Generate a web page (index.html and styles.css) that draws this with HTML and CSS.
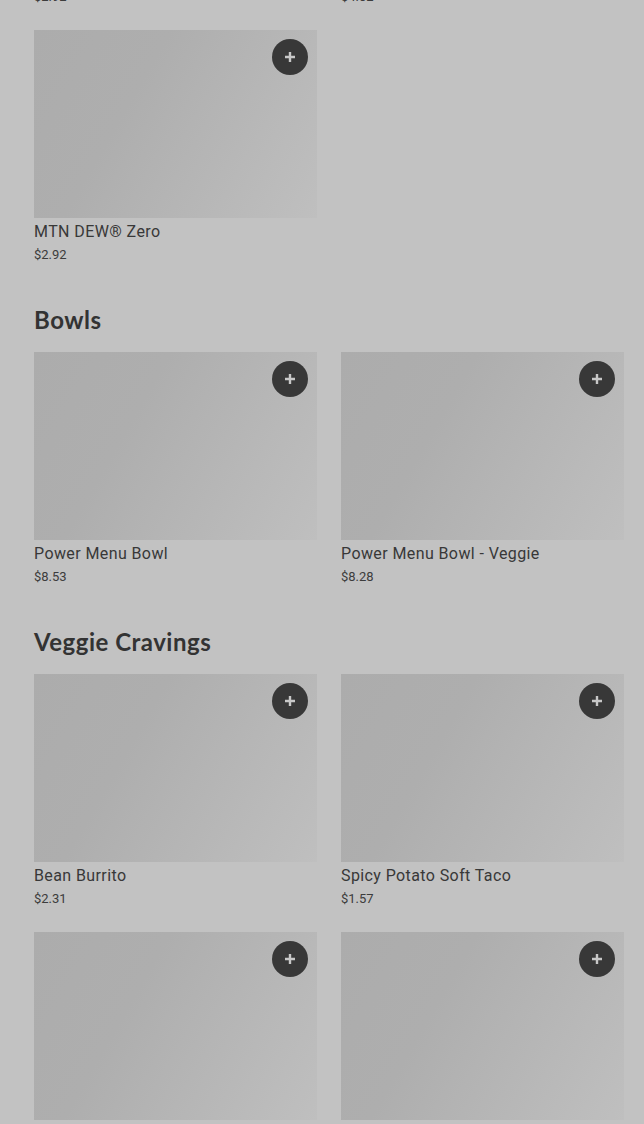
FILE: index.html
```html
<!DOCTYPE html>
<html lang="en">
  <head>
    <meta charset="UTF-8" />
    <meta name="viewport" content="width=device-width, initial-scale=1.0" />
    <title>Menu</title>
    <link rel="stylesheet" href="styles.css">
  </head>
  <body>
    <div class="menu">
      <section class="category drinks">
        <div class="grid">
          <div class="item">
            <div class="photo"><button class="add" aria-label="Add"><svg viewBox="0 0 12 12" width="12" height="12"><path d="M6 1v10M1 6h10" /></svg></button></div>
            <div class="name">MTN DEW® Baja Blast®</div>
            <div class="price">$2.92</div>
          </div>
          <div class="item">
            <div class="photo"><button class="add" aria-label="Add"><svg viewBox="0 0 12 12" width="12" height="12"><path d="M6 1v10M1 6h10" /></svg></button></div>
            <div class="name">Large Freeze</div>
            <div class="price">$4.02</div>
          </div>
          <div class="item">
            <div class="photo"><button class="add" aria-label="Add"><svg viewBox="0 0 12 12" width="12" height="12"><path d="M6 1v10M1 6h10" /></svg></button></div>
            <div class="name">MTN DEW® Zero</div>
            <div class="price">$2.92</div>
          </div>
        </div>
      </section>

      <section class="category">
        <h2>Bowls</h2>
        <div class="grid">
          <div class="item">
            <div class="photo"><button class="add" aria-label="Add"><svg viewBox="0 0 12 12" width="12" height="12"><path d="M6 1v10M1 6h10" /></svg></button></div>
            <div class="name">Power Menu Bowl</div>
            <div class="price">$8.53</div>
          </div>
          <div class="item">
            <div class="photo"><button class="add" aria-label="Add"><svg viewBox="0 0 12 12" width="12" height="12"><path d="M6 1v10M1 6h10" /></svg></button></div>
            <div class="name">Power Menu Bowl - Veggie</div>
            <div class="price">$8.28</div>
          </div>
        </div>
      </section>

      <section class="category">
        <h2>Veggie Cravings</h2>
        <div class="grid">
          <div class="item">
            <div class="photo"><button class="add" aria-label="Add"><svg viewBox="0 0 12 12" width="12" height="12"><path d="M6 1v10M1 6h10" /></svg></button></div>
            <div class="name">Bean Burrito</div>
            <div class="price">$2.31</div>
          </div>
          <div class="item">
            <div class="photo"><button class="add" aria-label="Add"><svg viewBox="0 0 12 12" width="12" height="12"><path d="M6 1v10M1 6h10" /></svg></button></div>
            <div class="name">Spicy Potato Soft Taco</div>
            <div class="price">$1.57</div>
          </div>
          <div class="item">
            <div class="photo"><button class="add" aria-label="Add"><svg viewBox="0 0 12 12" width="12" height="12"><path d="M6 1v10M1 6h10" /></svg></button></div>
            <div class="name">Black Bean Chalupa Supreme</div>
            <div class="price">$4.84</div>
          </div>
          <div class="item">
            <div class="photo"><button class="add" aria-label="Add"><svg viewBox="0 0 12 12" width="12" height="12"><path d="M6 1v10M1 6h10" /></svg></button></div>
            <div class="name">Black Bean Crunchwrap Supreme</div>
            <div class="price">$5.58</div>
          </div>
        </div>
      </section>
    </div>
  </body>
</html>
```

FILE: styles.css
```css
body {
  margin: 0;
  background-color: #c2c2c2;
  font-family: Roboto, "Noto Sans", Arial, sans-serif;
  color: #363636;
  overflow: hidden;
}

/* page is scrolled down, the drinks row above is cut off */
.menu {
  padding: 0 20px 0 34px;
  margin-top: -228px;
}

.category h2 {
  font-family: Lato, "Open Sans", sans-serif;
  font-weight: 700;
  font-size: 24px;
  line-height: 32px;
  letter-spacing: 0.5px;
  color: #333;
  margin: 40px 0 16px;
}

.grid {
  display: grid;
  grid-template-columns: repeat(2, 1fr);
  column-gap: 24px;
  row-gap: 24px;
}

.photo {
  position: relative;
  height: 188px;
  background: linear-gradient(120deg, #acacac 0%, #aeaeae 35%, #bfbfbf 100%);
}

.add {
  position: absolute;
  top: 9px;
  right: 9px;
  width: 36px;
  height: 36px;
  border: none;
  border-radius: 50%;
  background-color: #383838;
  display: flex;
  align-items: center;
  justify-content: center;
  padding: 0;
}

.add svg path {
  stroke: #c8c8c8;
  stroke-width: 2.4;
  fill: none;
}

.name {
  margin-top: 4px;
  font-size: 16px;
  line-height: 20px;
  letter-spacing: 0.4px;
  color: #383838;
}

.price {
  margin-top: 4px;
  font-size: 13px;
  line-height: 18px;
  color: #3c3c3c;
}
```
